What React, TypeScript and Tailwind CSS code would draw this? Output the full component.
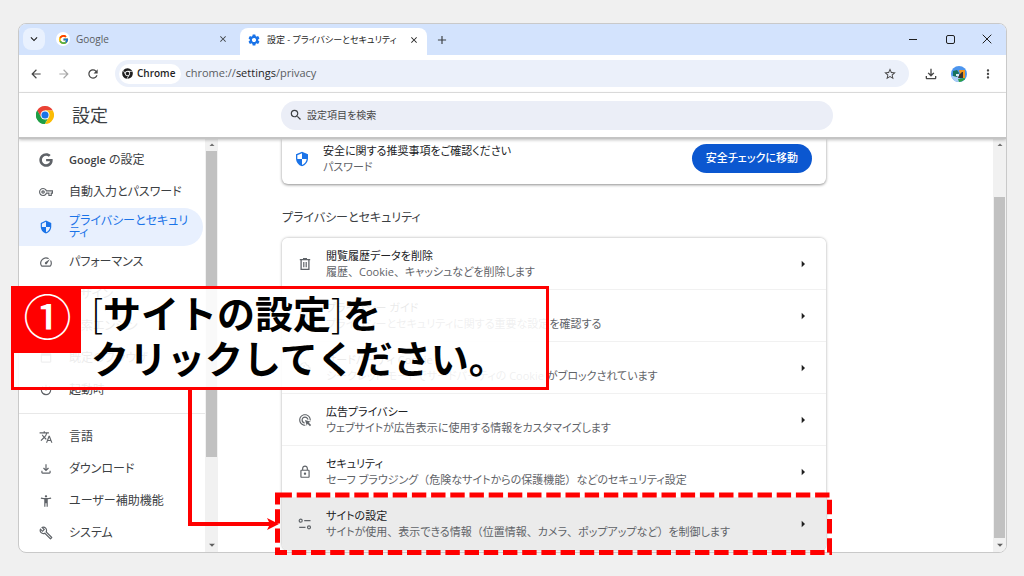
import { ReactNode, useState } from "react";
import {
  MdAccessibilityNew,
  MdAdsClick,
  MdArrowBack,
  MdArrowForward,
  MdArrowDropDown,
  MdArrowDropUp,
  MdArrowRight,
  MdClose,
  MdExpandMore,
  MdMoreVert,
  MdOutlineBuild,
  MdOutlineCookie,
  MdOutlineFileDownload,
  MdOutlineLock,
  MdOutlineMap,
  MdOutlinePalette,
  MdOutlineSpeed,
  MdOutlineVpnKey,
  MdPowerSettingsNew,
  MdRefresh,
  MdSearch,
  MdSecurity,
  MdSettings,
  MdStarBorder,
  MdTranslate,
  MdWebAsset,
  MdAdd,
} from "react-icons/md";
import { FaChrome, FaGoogle } from "react-icons/fa";
import { FcGoogle } from "react-icons/fc";

const TuneIcon = () => (
  <svg viewBox="0 0 14 14" className="h-3.5 w-3.5" fill="none" stroke="currentColor">
    <circle cx="2.7" cy="3.7" r="1.5" strokeWidth="1.2" />
    <path d="M6.2 3.7h6.3M1.2 10.3h6.3" strokeWidth="1.3" />
    <circle cx="11" cy="10.3" r="1.5" strokeWidth="1.2" />
  </svg>
);

const TrashIcon = () => (
  <svg viewBox="0 0 14 14" className="h-3.5 w-3.5" fill="none" stroke="currentColor">
    <path d="M1.8 2.6h10.4M5 1.6h4" strokeWidth="1.2" />
    <path d="M3.1 2.8v9.5h7.8V2.8" strokeWidth="1.3" />
    <path d="M5.8 5v5.2M8.2 5v5.2" strokeWidth="1.2" />
  </svg>
);

const ChromeLogo = () => (
  <svg viewBox="0 0 48 48" className="h-[18px] w-[18px]">
    <path d="M24 24 3.2 12A24 24 0 0 1 44.8 12L24 12z" fill="#ea4335" />
    <path d="M3.2 12A24 24 0 0 0 24 48L34.4 30 24 24 13.6 30z" fill="#34a853" />
    <path d="M24 48A24 24 0 0 0 44.8 12H24L34.4 30z" fill="#fbbc04" />
    <path d="M3.2 12 13.6 30 24 24 24 12 12 8z" fill="#ea4335" />
    <path d="M3.2 12 13.6 30 24 36 24 48A24 24 0 0 1 3.2 12z" fill="#1e9e45" />
    <circle cx="24" cy="24" r="12" fill="#fff" />
    <circle cx="24" cy="24" r="9.5" fill="#1a73e8" />
  </svg>
);

const Avatar = () => (
  <svg viewBox="0 0 16 16" className="h-4 w-4">
    <clipPath id="avatar">
      <circle cx="8" cy="8" r="8" />
    </clipPath>
    <g clipPath="url(#avatar)">
      <path d="M0 0h16v16H0z" fill="#4c95ee" />
      <path d="M0 10h8l2 6H0z" fill="#a9cdf5" />
      <path d="M2 5l4-1 2 3-2 4-4-1z" fill="#17735c" />
      <path d="M8 4h6v8h-4z" fill="#f2981f" />
      <path d="M8 9l3-3h1v6H7z" fill="#3b352f" />
      <path d="M7 13l6-1 2 1-5 3H8z" fill="#2da04a" />
      <path d="M5 8h3v2H5z" fill="#dfeaf2" />
    </g>
  </svg>
);

const menu = [
  {
    label: (
      <>
        <span className="text-[11px] font-semibold">Google</span> の設定
      </>
    ),
    icon: <FaGoogle />,
  },
  { label: "自動入力とパスワード", icon: <MdOutlineVpnKey /> },
  { label: "プライバシーとセキュリティ", icon: <MdSecurity />, active: true },
  { label: "パフォーマンス", icon: <MdOutlineSpeed /> },
  { label: "デザイン", icon: <MdOutlinePalette /> },
  { label: "検索エンジン", icon: <MdSearch /> },
  { label: "既定のブラウザ", icon: <MdWebAsset /> },
  { label: "起動時", icon: <MdPowerSettingsNew /> },
];

const advancedMenu = [
  { label: "言語", icon: <MdTranslate /> },
  { label: "ダウンロード", icon: <MdOutlineFileDownload /> },
  { label: "ユーザー補助機能", icon: <MdAccessibilityNew /> },
  { label: "システム", icon: <MdOutlineBuild /> },
];

const rows = [
  {
    title: "閲覧履歴データを削除",
    text: "履歴、Cookie、キャッシュなどを削除します",
    icon: <TrashIcon />,
  },
  {
    title: "プライバシー ガイド",
    text: "プライバシーとセキュリティに関する重要な設定を確認する",
    icon: <MdOutlineMap />,
  },
  {
    title: "サードパーティ Cookie",
    text: "シークレット モードでサードパーティの Cookie がブロックされています",
    icon: <MdOutlineCookie />,
  },
  {
    title: "広告プライバシー",
    text: "ウェブサイトが広告表示に使用する情報をカスタマイズします",
    icon: <MdAdsClick />,
  },
  {
    title: "セキュリティ",
    text: "セーフ ブラウジング（危険なサイトからの保護機能）などのセキュリティ設定",
    icon: <MdOutlineLock />,
  },
  {
    title: "サイトの設定",
    text: "サイトが使用、表示できる情報（位置情報、カメラ、ポップアップなど）を制御します",
    icon: <TuneIcon />,
    active: true,
  },
];

// kana is set proportionally, punctuation keeps its full width
const Description = ({ text }: { text: string }) => (
  <span className="block text-[#5f6368]">
    {text.split(/([、（）])/).map((part, i) =>
      i % 2 ? (
        <span key={i} className="[font-feature-settings:normal]">
          {part}
        </span>
      ) : (
        part
      )
    )}
  </span>
);

type MenuItemProps = { label: ReactNode; icon: ReactNode; active?: boolean };

const MenuItem = ({ label, icon, active }: MenuItemProps) => (
  <a
    href="#"
    className={
      active
        ? "mr-0.5 flex min-h-[38px] items-center gap-4 rounded-r-full bg-[#e8f0fe] pl-5 pr-1 text-[#1a73e8]"
        : "mr-0.5 flex min-h-8 items-center gap-4 pl-5 pr-1 text-[#3c4043]"
    }
  >
    <span
      className={
        active ? "shrink-0 text-sm text-[#1a73e8]" : "shrink-0 text-sm text-[#5f6368]"
      }
    >
      {icon}
    </span>
    <span className="text-xs leading-3">{label}</span>
  </a>
);

const Scrollbar = ({ children }: { children: ReactNode }) => (
  <div className="flex w-[13px] shrink-0 flex-col items-center bg-[#f1f1f1]">
    <MdArrowDropUp className="h-3 w-3 shrink-0 text-[#707070]" />
    <div className="flex w-[11px] flex-1 flex-col">{children}</div>
    <MdArrowDropDown className="h-3.5 w-3.5 shrink-0 text-[#606060]" />
  </div>
);

const App = () => {
  const [query, setQuery] = useState("");

  return (
    <div className="relative flex h-screen flex-col overflow-hidden bg-[#f0f0f0] py-[23px] pl-[18px] pr-[17px] font-['Open_Sans','Noto_Sans_CJK_JP',sans-serif] text-[#3c4043] [font-feature-settings:'palt']">
      <div className="flex min-h-0 flex-1 flex-col overflow-hidden rounded-lg border border-[#c9c9c9] bg-white">
        {/* tab strip */}
        <div className="flex h-[31px] shrink-0 items-end bg-[#d3e3fd]">
          <button
            aria-label="タブを検索"
            className="mb-[5px] ml-1 flex h-[22px] w-[22px] items-center justify-center rounded-lg bg-[#e9f1fe] text-[#1f1f1f]"
          >
            <MdExpandMore className="h-3.5 w-3.5" />
          </button>
          <div className="flex h-8 w-[195px] items-center pl-[11px] pr-3">
            <span className="flex h-3.5 w-3.5 items-center justify-center rounded-full bg-white">
              <FcGoogle className="h-[11px] w-[11px]" />
            </span>
            <span className="ml-1.5 flex-1 text-[10px] text-[#5a5d61]">Google</span>
            <button aria-label="タブを閉じる">
              <MdClose className="h-2.5 w-2.5" />
            </button>
          </div>
          <div className="flex h-[27px] w-[187px] items-center rounded-t-lg bg-white pb-1 pl-[7px] pr-2">
            <MdSettings className="h-3.5 w-3.5 text-[#1a73e8]" />
            <span className="ml-1.5 flex-1 whitespace-nowrap text-[9px] text-[#1f1f1f]">
              設定 - プライバシーとセキュリティ
            </span>
            <button aria-label="タブを閉じる">
              <MdClose className="h-2.5 w-2.5 text-[#1f1f1f]" />
            </button>
          </div>
          <button aria-label="新しいタブ" className="mb-2 ml-2">
            <MdAdd className="h-3.5 w-3.5" />
          </button>
          <div className="ml-auto mr-3 flex h-8 items-center gap-[23px] text-[#1f1f1f]">
            <button aria-label="最小化" className="flex h-3.5 w-3.5 items-center justify-center">
              <span className="h-px w-2 bg-[#1f1f1f]" />
            </button>
            <button aria-label="最大化" className="flex h-3.5 w-3.5 items-center justify-center">
              <span className="h-[9px] w-[9px] rounded-xs border border-[#1f1f1f]" />
            </button>
            <button aria-label="閉じる" className="flex h-3.5 w-3.5 items-center justify-center">
              <svg viewBox="0 0 10 10" className="h-2.5 w-2.5" stroke="currentColor">
                <path d="M.7.7l8.6 8.6M9.3.7L.7 9.3" />
              </svg>
            </button>
          </div>
        </div>

        {/* toolbar */}
        <div className="flex h-[38px] shrink-0 items-center border-b border-[#e3e3e3] pl-2.5 pr-[11px] text-[#474747]">
          <button aria-label="戻る">
            <MdArrowBack className="h-3.5 w-3.5" />
          </button>
          <button aria-label="進む" className="ml-3.5 text-[#a8a8a8]">
            <MdArrowForward className="h-3.5 w-3.5" />
          </button>
          <button aria-label="再読み込み" className="ml-[15px]">
            <MdRefresh className="h-3.5 w-3.5" />
          </button>
          <div className="ml-[15px] flex h-[27px] flex-1 items-center rounded-full bg-[#ebf0fa] pl-1 pr-3">
            <span className="flex h-5 items-center gap-1 rounded-full bg-white pl-[3px] pr-1.5 text-[#1f1f1f]">
              <FaChrome className="h-[11px] w-[11px]" />
              <span className="text-[10px] font-semibold">Chrome</span>
            </span>
            <span className="ml-1 flex-1 text-[11px] text-[#5a5d61]">
              chrome://<span className="text-[#1f1f1f]">settings</span>/privacy
            </span>
            <button aria-label="ブックマークに追加">
              <MdStarBorder className="h-3.5 w-3.5" />
            </button>
          </div>
          <button aria-label="ダウンロード" className="ml-3.5">
            <MdOutlineFileDownload className="h-4 w-4" />
          </button>
          <button aria-label="プロフィール" className="ml-3">
            <Avatar />
          </button>
          <button aria-label="メニュー" className="ml-3.5">
            <MdMoreVert className="h-3.5 w-3.5" />
          </button>
        </div>

        {/* settings header */}
        <header className="relative flex h-[46px] shrink-0 items-center border-b-2 border-[#c4c4c4] pl-[17px] shadow-[0_1px_3px_rgba(0,0,0,0.25)]">
          <ChromeLogo />
          <h1 className="ml-[18px] w-[209px] text-lg">設定</h1>
          <label className="flex h-[29px] w-full max-w-[552px] items-center gap-1 rounded-full bg-[#ebeef7] px-2">
            <MdSearch className="h-3.5 w-3.5 shrink-0" />
            <input
              type="text"
              aria-label="設定項目を検索"
              placeholder="設定項目を検索"
              value={query}
              onChange={(e) => setQuery(e.target.value)}
              className="w-full bg-transparent text-[10px] outline-none placeholder:text-[#474747]"
            />
          </label>
        </header>

        <div className="flex min-h-0 flex-1">
          <nav className="w-[186px] shrink-0 overflow-hidden pt-[5px]">
            {menu.map((item, i) => (
              <MenuItem key={i} {...item} />
            ))}
            <hr className="my-[7px] border-[#e8e8e8]" />
            {advancedMenu.map((item) => (
              <MenuItem key={item.label} {...item} />
            ))}
          </nav>
          <Scrollbar>
            <div className="h-[79%] bg-[#c1c1c1]" />
          </Scrollbar>

          <main className="min-w-0 flex-1 overflow-hidden pl-16 pr-4">
            <div className="flex h-[45px] max-w-[544px] items-center rounded-b-md bg-white pb-1.5 pl-3 pr-3.5 shadow-[0_1px_3px_rgba(0,0,0,0.45)]">
              <MdSecurity className="h-4 w-4 shrink-0 text-[#1a73e8]" />
              <div className="ml-[13px] flex-1 text-[11px] leading-4">
                <p className="text-[#202124]">安全に関する推奨事項をご確認ください</p>
                <p className="text-[#5f6368]">パスワード</p>
              </div>
              <button className="h-[29px] rounded-full bg-[#0b57d0] px-3.5 text-[11px] font-medium text-white">
                安全チェックに移動
              </button>
            </div>

            <h2 className="mb-[11px] mt-[25px] text-xs leading-[18px]">プライバシーとセキュリティ</h2>

            <ul className="max-w-[544px] overflow-hidden rounded-md shadow-[0_0_3px_rgba(0,0,0,0.35)]">
              {rows.map((row) => (
                <li key={row.title} className="border-b border-[#f1f1f1] last:border-b-0">
                  <button
                    className={
                      row.active
                        ? "flex h-[52px] w-full items-center bg-[#ebebeb] pl-4 pr-[15px] text-left"
                        : "flex h-[51px] w-full items-center bg-white pl-4 pr-[15px] text-left"
                    }
                  >
                    <span className="shrink-0 text-sm text-[#5f6368]">{row.icon}</span>
                    <span className="ml-3.5 flex-1 whitespace-nowrap text-[11px] leading-4">
                      <span className="block text-[#202124]">{row.title}</span>
                      <Description text={row.text} />
                    </span>
                    <MdArrowRight className="h-4 w-4 text-[#1f1f1f]" />
                  </button>
                </li>
              ))}
            </ul>
          </main>
          <Scrollbar>
            <div className="mt-[46px] flex-1 bg-[#c1c1c1]" />
          </Scrollbar>
        </div>
      </div>

      {/* callout with its arrow and the dashed frame */}
      <svg
        viewBox="0 0 1024 576"
        className="pointer-events-none absolute left-0 top-0 h-[576px] w-[1024px]"
        fill="none"
        stroke="#f00"
      >
        <path d="M190 388v136h80" strokeWidth="4" />
        <path d="M279 524l-12-6 3 6-3 6z" fill="#f00" stroke="none" />
        <rect
          x="277.5"
          y="495"
          width="552"
          height="57.5"
          strokeWidth="5"
          strokeDasharray="14.4 4.8"
        />
      </svg>
      <div className="absolute left-[11px] top-[286px] flex h-[104px] w-[538px] border-[3px] border-[#f00] bg-white/90">
        <span className="flex h-16 w-[67px] shrink-0 items-center justify-center bg-[#f00] pb-2 text-5xl font-medium text-white">
          ①
        </span>
        <p className="ml-2.5 whitespace-nowrap font-['Noto_Sans_CJK_JP',sans-serif] text-[38px] font-bold leading-[45px] text-black [font-feature-settings:normal]">
          <span className="font-light">[</span>サイトの設定<span className="font-light">]</span>を
          <br />
          クリックしてください。
        </p>
      </div>
    </div>
  );
};

export default App;
